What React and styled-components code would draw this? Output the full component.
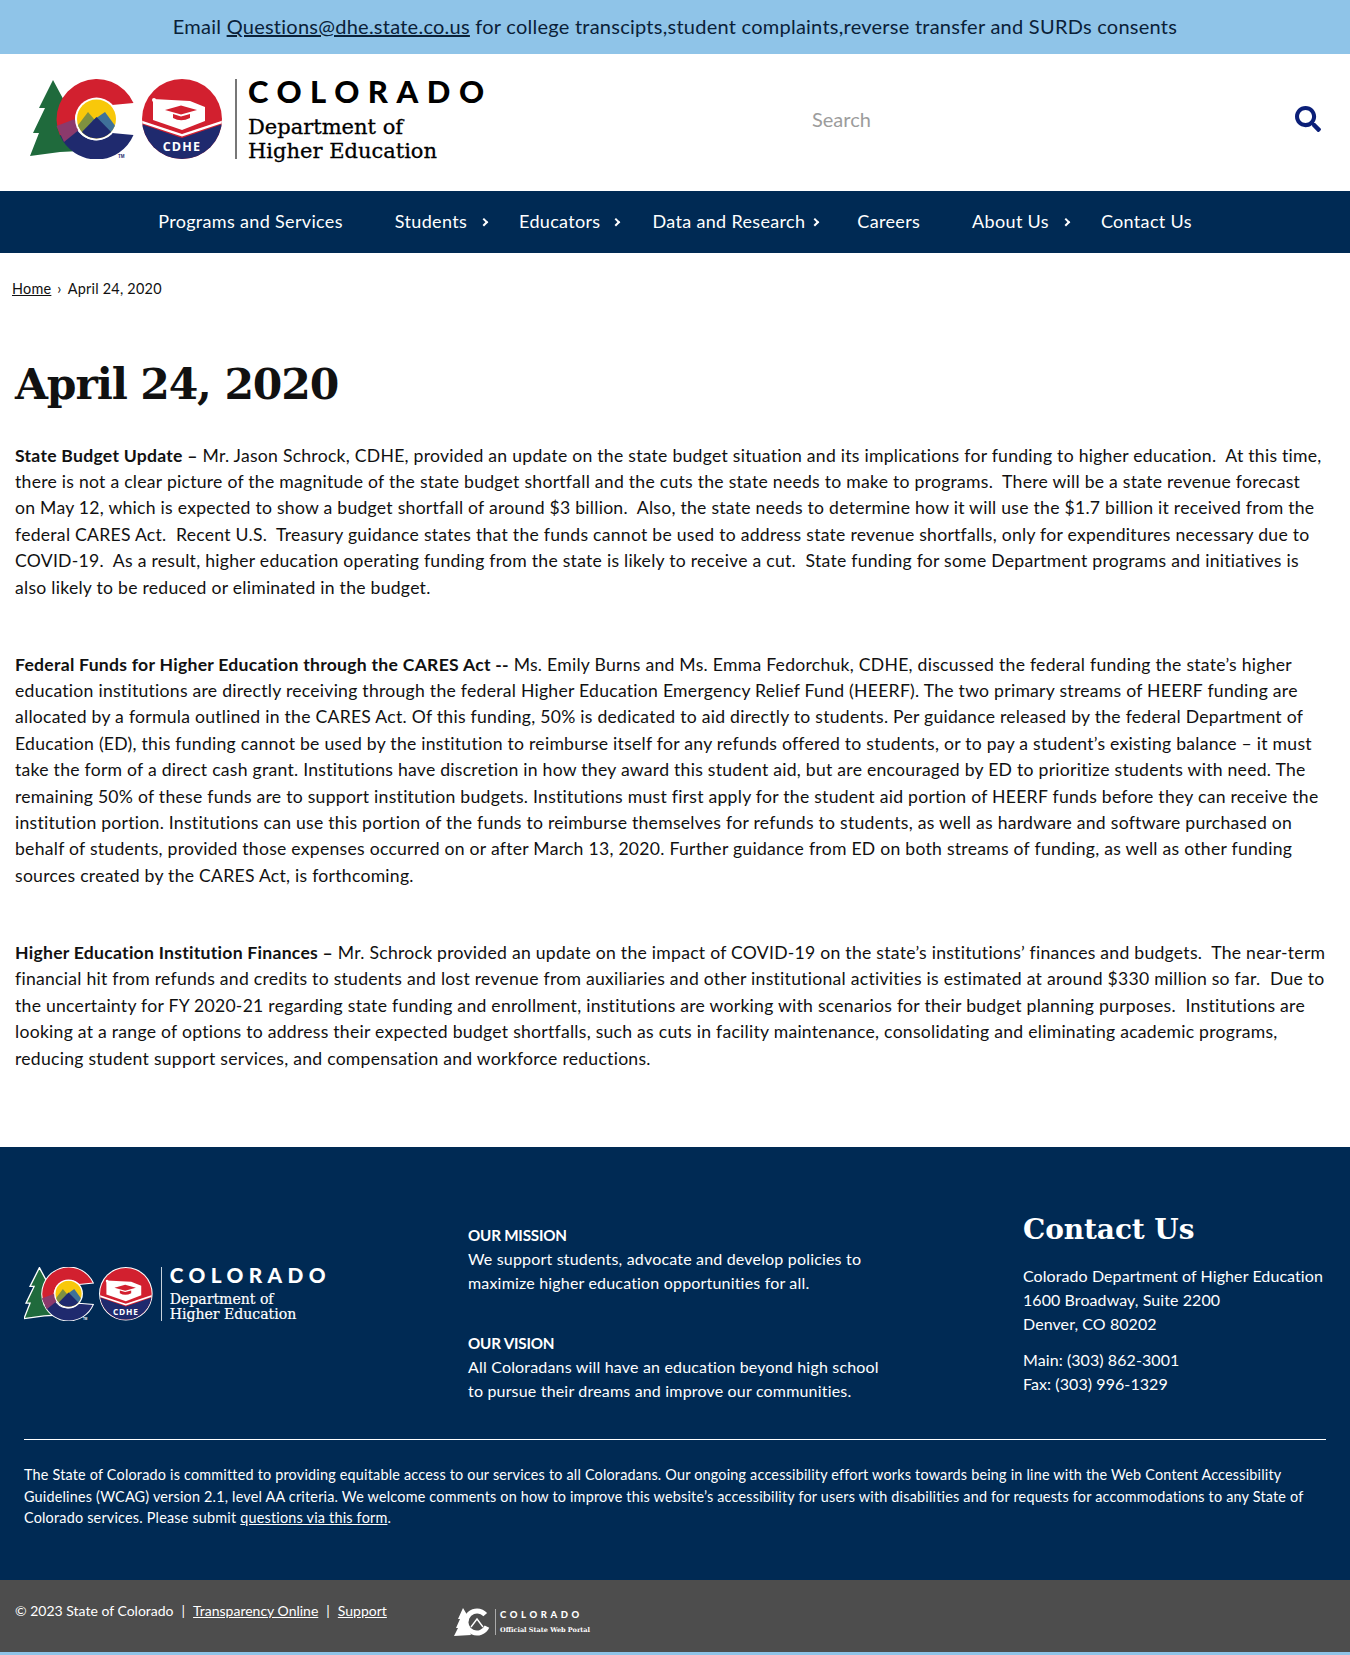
import React from "react";
import styled, { createGlobalStyle } from "styled-components";
import { FaSearch } from "react-icons/fa";

const BODY_FONT = `"Lato", "Open Sans", "Liberation Sans", sans-serif`;
const SLAB_FONT = `"DejaVu Serif", "Liberation Serif", serif`;
const NAVY = "#002a54";
const SKY = "#8fc4e8";

const GlobalStyle = createGlobalStyle`
    html, body {
        margin: 0;
        padding: 0;
        background: ${SKY};
    }
    body {
        font-family: ${BODY_FONT};
        color: #111;
    }
    * {
        box-sizing: border-box;
    }
`;

const Page = styled.div`
    width: 1350px;
    min-height: 1655px;
    background: ${SKY};
`;

const Banner = styled.div`
    height: 54px;
    background: ${SKY};
    display: flex;
    align-items: center;
    justify-content: center;
    padding-bottom: 2px;
    font-size: 20px;
    letter-spacing: 0.25px;
    color: #0a2138;
    a {
        color: inherit;
    }
`;

const Header = styled.header`
    height: 137px;
    background: white;
    display: flex;
    align-items: center;
    justify-content: space-between;
    padding: 0 0 7px 30px;
`;

const LogoWrap = styled.div`
    display: flex;
    align-items: stretch;
    height: ${(props) => props.$scale * 80}px;
    color: ${(props) => (props.$light ? "white" : "black")};
`;

const LogoMarks = styled.svg`
    width: ${(props) => props.$scale * 205}px;
    height: ${(props) => props.$scale * 80}px;
    flex-shrink: 0;
`;

const LogoText = styled.div`
    border-left: ${(props) => Math.max(1, props.$scale * 2)}px solid ${(props) => (props.$light ? "#c8d2dc" : "#777")};
    padding-left: ${(props) => props.$scale * 11}px;
    display: flex;
    flex-direction: column;
    justify-content: space-between;
`;

const LogoState = styled.div`
    font-family: ${BODY_FONT};
    font-weight: 900;
    font-size: ${(props) => props.$scale * 31}px;
    line-height: ${(props) => props.$scale * 24}px;
    letter-spacing: ${(props) => (props.$scale < 1 ? "0.26em" : "0.275em")};
    white-space: nowrap;
`;

const LogoDept = styled.div`
    font-family: ${SLAB_FONT};
    font-size: ${(props) => props.$scale * 21}px;
    line-height: ${(props) => props.$scale * 23.5}px;
    margin-bottom: ${(props) => props.$scale * -4}px;
    white-space: nowrap;
    font-weight: 400;
    -webkit-text-stroke: ${(props) => props.$scale * 0.3}px currentColor;
`;

const SearchForm = styled.form`
    width: 538px;
    display: flex;
    align-items: center;
    justify-content: space-between;
    padding-right: 29px;
`;

const SearchInput = styled.input`
    border: 0;
    outline: 0;
    background: transparent;
    padding: 0;
    width: 400px;
    font-family: ${BODY_FONT};
    font-size: 20px;
    color: #333;
    &::placeholder {
        color: #9c9c9c;
        opacity: 1;
    }
`;

const SearchButton = styled.button`
    border: 0;
    background: transparent;
    padding: 0;
    display: flex;
    color: #0b1f78;
    svg {
        font-size: 26px;
    }
`;

const Nav = styled.nav`
    height: 62px;
    background: ${NAVY};
    display: flex;
    justify-content: center;
`;

const NavList = styled.div`
    display: flex;
    align-items: center;
    padding-bottom: 3px;
`;

const NavItem = styled.a`
    position: relative;
    padding: 0 26px;
    font-size: 18px;
    letter-spacing: 0.33px;
    color: white;
    white-space: nowrap;
`;

const NavChevron = styled.span`
    position: absolute;
    top: 50%;
    right: ${(props) => props.$right}px;
    width: 6px;
    height: 6px;
    border-top: 2px solid white;
    border-right: 2px solid white;
    transform: translateY(-30%) rotate(45deg);
`;

const Main = styled.main`
    background: white;
    padding: 25px 15px 75px;
`;

const Breadcrumb = styled.div`
    font-size: 14.4px;
    line-height: 21.6px;
    letter-spacing: 0.25px;
    margin-left: -3px;
    a {
        color: inherit;
    }
`;

const CrumbSep = styled.span`
    margin: 0 6px;
`;

const Title = styled.h1`
    font-family: ${SLAB_FONT};
    font-weight: 700;
    font-size: 42.5px;
    letter-spacing: -1.15px;
    line-height: 58px;
    margin: 55px 0 30px;
    color: #111;
`;

const Paragraph = styled.p`
    font-size: 17.6px;
    line-height: 26.4px;
    letter-spacing: 0.26px;
    margin: 0 0 50.6px;
    white-space: nowrap;
    &:last-child {
        margin-bottom: 0;
    }
    strong {
        font-weight: 700;
    }
`;

const Footer = styled.footer`
    background: ${NAVY};
    color: white;
    height: 433px;
    padding: 60px 24px 0;
    font-size: 16px;
    line-height: 24px;
`;

const FooterGrid = styled.div`
    display: grid;
    grid-template-columns: 444px 555px 1fr;
    padding-bottom: 36px;
    border-bottom: 1px solid white;
`;

const FooterLogo = styled.div`
    padding-top: 60px;
`;

const Mission = styled.div`
    padding-top: 16px;
    letter-spacing: 0.18px;
`;

const MissionBlock = styled.div`
    margin-bottom: 36px;
    &:last-child {
        margin-bottom: 0;
    }
`;

const MissionHead = styled.div`
    font-weight: 700;
    font-size: 15.2px;
    letter-spacing: -0.2px;
`;

const ContactHead = styled.h2`
    font-family: ${SLAB_FONT};
    font-weight: 700;
    font-size: 28px;
    letter-spacing: -0.1px;
    line-height: 42px;
    margin: 0 0 13px;
    padding-top: 2px;
`;

const ContactLines = styled.div`
    margin-bottom: 12px;
    letter-spacing: 0.08px;
    white-space: nowrap;
    &:last-child {
        margin-bottom: 0;
    }
`;

const Accessibility = styled.p`
    margin: 24px 0 0;
    font-size: 14.4px;
    line-height: 21.6px;
    letter-spacing: 0.2px;
    white-space: nowrap;
    a {
        color: inherit;
    }
`;

const BottomBar = styled.div`
    height: 72px;
    background: #4d4d4d;
    color: white;
    display: flex;
    align-items: flex-start;
    padding: 20px 0 0 15px;
    font-size: 14px;
    line-height: 21.6px;
`;

const BottomLinks = styled.div`
    flex: 0 0 439px;
    a {
        color: inherit;
    }
`;

const Pipe = styled.span`
    margin: 0 8px;
`;

const StateLogo = styled.div`
    display: flex;
    align-items: center;
    margin-top: 7px;
    height: 30px;
`;

const StateMark = styled.svg`
    width: 38px;
    height: 30px;
`;

const StateText = styled.div`
    margin-left: 3px;
    padding-left: 4px;
    border-left: 1px solid #aaa;
    height: 26px;
    display: flex;
    flex-direction: column;
    justify-content: space-between;
`;

const StateName = styled.div`
    font-weight: 900;
    font-size: 9.5px;
    line-height: 11px;
    letter-spacing: 0.38em;
`;

const StateSub = styled.div`
    font-family: ${SLAB_FONT};
    font-weight: 700;
    font-size: 6.5px;
    line-height: 9px;
    white-space: nowrap;
`;

function Marks({ scale, light, clipId }) {
    const edge = light ? "white" : "none";
    return (
        <LogoMarks $scale={scale} viewBox="0 0 205 80" aria-hidden="true">
            <defs>
                <clipPath id={clipId}>
                    <circle cx="66.5" cy="40" r="19.5" />
                </clipPath>
                <clipPath id={`${clipId}-badge`}>
                    <circle cx="152" cy="40" r={light ? 38.5 : 40} />
                </clipPath>
            </defs>
            <path
                d="M23 1 L38 29 L36 40 L50 72 L30 73 L0 77 L9 54 L3 54 L15 29 L9 29 Z"
                fill="#1f6a3c"
                stroke={edge}
                strokeWidth={light ? 2 : 0}
            />
            <path
                d="M103.5 24 A40 40 0 1 0 30 56.5 L46 48.9 A22 22 0 0 1 82 26 Z"
                fill="#d2202f"
                stroke={edge}
                strokeWidth={light ? 1.5 : 0}
            />
            <path
                d="M30 56.5 A40 40 0 0 0 103.5 56 L82 54 A22 22 0 0 1 46 48.9 Z"
                fill="#1f2a6e"
                stroke={edge}
                strokeWidth={light ? 1.5 : 0}
            />
            <path d="M26.5 47 L45 40 L50 50 L34 63 Z" fill="#8b3a6c" />
            <circle cx="66.5" cy="40" r="21.5" fill="white" />
            <g clipPath={`url(#${clipId})`}>
                <rect x="45" y="20" width="44" height="40" fill="#f8c80a" />
                <path d="M45 50 L58 33 L70 47 L60 60 L45 60 Z" fill="#7f9140" />
                <path d="M62 42 L75 33 L89 52 L70 56 Z" fill="#3f7199" />
                <path d="M66.5 38 L90 62 L43 62 Z" fill="#1f2a6e" />
            </g>
            <text x="88" y="79" fontFamily="Liberation Sans, sans-serif" fontWeight="700" fontSize="4.5" fill={light ? "white" : "#1f2a6e"}>TM</text>

            {light && <circle cx="152" cy="40" r="40" fill="white" />}
            <g clipPath={`url(#${clipId}-badge)`}>
                <rect x="110" y="0" width="84" height="80" fill="#d2202f" />
                <path d="M110 44.5 L152 59 L194 44.5 L194 80 L110 80 Z" fill="#1f2a6e" />
                <path d="M110 41 L152 55 L194 41 L194 43.5 L152 57.6 L110 43.5 Z" fill="white" />
            </g>
            <path d="M123 20 L160 22 L175 28 L175 42 L152 51 L123 41 Z" fill="white" />
            <circle cx="124" cy="21" r="2" fill="white" />
            <path d="M135 31 L151 26.5 L167 31 L151 35.5 Z" fill="#d2202f" />
            <path d="M143 35 L151 37.5 L160 35 L160 39 Q151 43.5 143 39 Z" fill="#d2202f" />
            <text x="152" y="71.5" textAnchor="middle" fontFamily="Open Sans, sans-serif" fontWeight="700" fontSize="12.5" letterSpacing="1.2" fill="white">CDHE</text>
        </LogoMarks>
    );
}

function Logo({ scale, light, clipId }) {
    return (
        <LogoWrap $scale={scale} $light={light}>
            <Marks scale={scale} light={light} clipId={clipId} />
            <LogoText $scale={scale} $light={light}>
                <LogoState $scale={scale}>COLORADO</LogoState>
                <LogoDept $scale={scale}>
                    Department of
                    <br />
                    Higher Education
                </LogoDept>
            </LogoText>
        </LogoWrap>
    );
}

const NAV_ITEMS = [
    { label: "Programs and Services" },
    { label: "Students", chevron: 6 },
    { label: "Educators", chevron: 7 },
    { label: "Data and Research", chevron: 13 },
    { label: "Careers" },
    { label: "About Us", chevron: 6 },
    { label: "Contact Us" },
];

function App() {
    return (
        <Page>
            <GlobalStyle />
            <Banner>
                <span>
                    Email <a href="#mail">Questions@dhe.state.co.us</a> for college transcipts,student complaints,reverse transfer and SURDs consents
                </span>
            </Banner>
            <Header>
                <Logo scale={1} clipId="logo-top" />
                <SearchForm>
                    <SearchInput placeholder="Search" />
                    <SearchButton type="button" aria-label="Search">
                        <FaSearch />
                    </SearchButton>
                </SearchForm>
            </Header>
            <Nav>
                <NavList>
                    {NAV_ITEMS.map((item) => (
                        <NavItem key={item.label}>
                            {item.label}
                            {item.chevron && <NavChevron $right={item.chevron} />}
                        </NavItem>
                    ))}
                </NavList>
            </Nav>
            <Main>
                <Breadcrumb>
                    <a href="#home">Home</a><CrumbSep>›</CrumbSep>April 24, 2020
                </Breadcrumb>
                <Title>April 24, 2020</Title>
                <Paragraph>
                    <strong>State Budget Update –</strong> Mr. Jason Schrock, CDHE, provided an update on the state budget situation and its implications for funding to higher education.&nbsp; At this time,
                    <br />
                    there is not a clear picture of the magnitude of the state budget shortfall and the cuts the state needs to make to programs.&nbsp; There will be a state revenue forecast
                    <br />
                    on May 12, which is expected to show a budget shortfall of around $3 billion.&nbsp; Also, the state needs to determine how it will use the $1.7 billion it received from the
                    <br />
                    federal CARES Act.&nbsp; Recent U.S.&nbsp; Treasury guidance states that the funds cannot be used to address state revenue shortfalls, only for expenditures necessary due to
                    <br />
                    COVID-19.&nbsp; As a result, higher education operating funding from the state is likely to receive a cut.&nbsp; State funding for some Department programs and initiatives is
                    <br />
                    also likely to be reduced or eliminated in the budget.
                </Paragraph>
                <Paragraph>
                    <strong>Federal Funds for Higher Education through the CARES Act --</strong> Ms. Emily Burns and Ms. Emma Fedorchuk, CDHE, discussed the federal funding the state’s higher
                    <br />
                    education institutions are directly receiving through the federal Higher Education Emergency Relief Fund (HEERF). The two primary streams of HEERF funding are
                    <br />
                    allocated by a formula outlined in the CARES Act. Of this funding, 50% is dedicated to aid directly to students. Per guidance released by the federal Department of
                    <br />
                    Education (ED), this funding cannot be used by the institution to reimburse itself for any refunds offered to students, or to pay a student’s existing balance – it must
                    <br />
                    take the form of a direct cash grant. Institutions have discretion in how they award this student aid, but are encouraged by ED to prioritize students with need. The
                    <br />
                    remaining 50% of these funds are to support institution budgets. Institutions must first apply for the student aid portion of HEERF funds before they can receive the
                    <br />
                    institution portion. Institutions can use this portion of the funds to reimburse themselves for refunds to students, as well as hardware and software purchased on
                    <br />
                    behalf of students, provided those expenses occurred on or after March 13, 2020. Further guidance from ED on both streams of funding, as well as other funding
                    <br />
                    sources created by the CARES Act, is forthcoming.
                </Paragraph>
                <Paragraph>
                    <strong>Higher Education Institution Finances –</strong> Mr. Schrock provided an update on the impact of COVID-19 on the state’s institutions’ finances and budgets.&nbsp; The near-term
                    <br />
                    financial hit from refunds and credits to students and lost revenue from auxiliaries and other institutional activities is estimated at around $330 million so far.&nbsp; Due to
                    <br />
                    the uncertainty for FY 2020-21 regarding state funding and enrollment, institutions are working with scenarios for their budget planning purposes.&nbsp; Institutions are
                    <br />
                    looking at a range of options to address their expected budget shortfalls, such as cuts in facility maintenance, consolidating and eliminating academic programs,
                    <br />
                    reducing student support services, and compensation and workforce reductions.
                </Paragraph>
            </Main>
            <Footer>
                <FooterGrid>
                    <FooterLogo>
                        <Logo scale={0.67} light clipId="logo-bottom" />
                    </FooterLogo>
                    <Mission>
                        <MissionBlock>
                            <MissionHead>OUR MISSION</MissionHead>
                            We support students, advocate and develop policies to
                            <br />
                            maximize higher education opportunities for all.
                        </MissionBlock>
                        <MissionBlock>
                            <MissionHead>OUR VISION</MissionHead>
                            All Coloradans will have an education beyond high school
                            <br />
                            to pursue their dreams and improve our communities.
                        </MissionBlock>
                    </Mission>
                    <div>
                        <ContactHead>Contact Us</ContactHead>
                        <ContactLines>
                            Colorado Department of Higher Education
                            <br />
                            1600 Broadway, Suite 2200
                            <br />
                            Denver, CO 80202
                        </ContactLines>
                        <ContactLines>
                            Main: (303) 862-3001
                            <br />
                            Fax: (303) 996-1329
                        </ContactLines>
                    </div>
                </FooterGrid>
                <Accessibility>
                    The State of Colorado is committed to providing equitable access to our services to all Coloradans. Our ongoing accessibility effort works towards being in line with the Web Content Accessibility
                    <br />
                    Guidelines (WCAG) version 2.1, level AA criteria. We welcome comments on how to improve this website’s accessibility for users with disabilities and for requests for accommodations to any State of
                    <br />
                    Colorado services. Please submit <a href="#form">questions via this form</a>.
                </Accessibility>
            </Footer>
            <BottomBar>
                <BottomLinks>
                    © 2023 State of Colorado<Pipe>|</Pipe>
                    <a href="#transparency">Transparency Online</a>
                    <Pipe>|</Pipe>
                    <a href="#support">Support</a>
                </BottomLinks>
                <StateLogo>
                    <StateMark viewBox="0 0 38 30" aria-hidden="true">
                        <path d="M9 1 L15 11 L13 20 L17 28 L0 29 L4 21 L2 21 L6 12 L4 12 Z" fill="white" />
                        <circle cx="23" cy="15" r="11" fill="none" stroke="white" strokeWidth="5" strokeDasharray="56 13" transform="rotate(25 23 15)" />
                        <path d="M17 20 L23 12 L29 20" fill="none" stroke="white" strokeWidth="1.4" />
                    </StateMark>
                    <StateText>
                        <StateName>COLORADO</StateName>
                        <StateSub>Official State Web Portal</StateSub>
                    </StateText>
                </StateLogo>
            </BottomBar>
        </Page>
    );
}

export default App;
